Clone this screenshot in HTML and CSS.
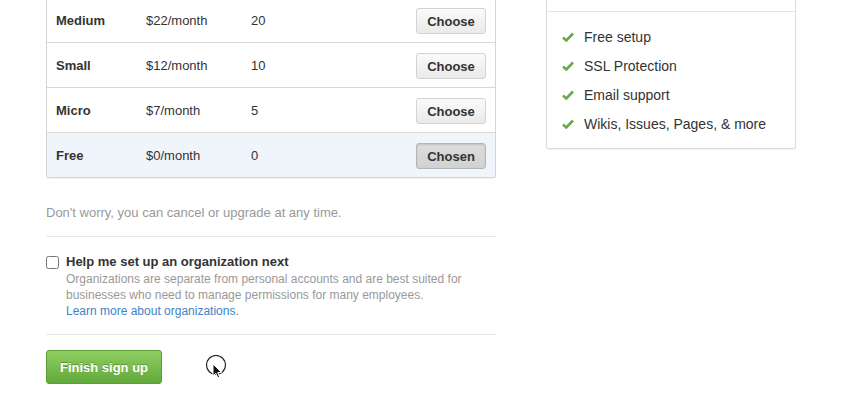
FILE: index.html
```
<!DOCTYPE html>
<html>
<head>
<meta charset="utf-8">
<link rel="stylesheet" href="styles.css">
</head>
<body>
<div class="page">
  <div class="main">
    <div class="plans">
      <div class="plan"><span class="name">Medium</span><span class="price">$22/month</span><span class="repos">20</span><button class="btn">Choose</button></div>
      <div class="plan"><span class="name">Small</span><span class="price">$12/month</span><span class="repos">10</span><button class="btn">Choose</button></div>
      <div class="plan"><span class="name">Micro</span><span class="price">$7/month</span><span class="repos">5</span><button class="btn">Choose</button></div>
      <div class="plan selected"><span class="name">Free</span><span class="price">$0/month</span><span class="repos">0</span><button class="btn chosen">Chosen</button></div>
    </div>
    <p class="note">Don't worry, you can cancel or upgrade at any time.</p>
    <div class="org">
      <input type="checkbox" class="check">
      <div class="org-text">
        <div class="org-label">Help me set up an organization next</div>
        <div class="org-desc">Organizations are separate from personal accounts and are best suited for businesses who need to manage permissions for many employees.<br><a href="#">Learn more about organizations.</a></div>
      </div>
    </div>
    <div class="actions">
      <button class="finish">Finish sign up</button>
    </div>
  </div>
  <div class="side">
    <div class="side-head"></div>
    <ul class="features">
      <li><svg class="tick" viewBox="0 0 12 10" width="12" height="10"><path d="M1 5.5 L4.3 8.5 L11 1.5" fill="none" stroke="#6aa84f" stroke-width="2.6"/></svg>Free setup</li>
      <li><svg class="tick" viewBox="0 0 12 10" width="12" height="10"><path d="M1 5.5 L4.3 8.5 L11 1.5" fill="none" stroke="#6aa84f" stroke-width="2.6"/></svg>SSL Protection</li>
      <li><svg class="tick" viewBox="0 0 12 10" width="12" height="10"><path d="M1 5.5 L4.3 8.5 L11 1.5" fill="none" stroke="#6aa84f" stroke-width="2.6"/></svg>Email support</li>
      <li><svg class="tick" viewBox="0 0 12 10" width="12" height="10"><path d="M1 5.5 L4.3 8.5 L11 1.5" fill="none" stroke="#6aa84f" stroke-width="2.6"/></svg>Wikis, Issues, Pages, &amp; more</li>
    </ul>
  </div>
</div>
<svg class="cursor" width="30" height="30" viewBox="0 0 30 30">
  <circle cx="11" cy="10" r="9.5" fill="none" stroke="#222" stroke-width="1.2"/>
  <path d="M8 9 L8 21 L10.8 18.3 L12.8 22.8 L14.6 22 L12.7 17.6 L16.5 17.5 Z" fill="#111" stroke="#fff" stroke-width="1"/>
</svg>
</body>
</html>
```
FILE: styles.css
```
* { box-sizing: border-box; }
html, body { margin: 0; padding: 0; background: #fff; }
body {
  font-family: "Liberation Sans", Arial, sans-serif;
  color: #333;
  font-size: 13px;
  overflow: hidden;
  height: 408px;
}
.page {
  display: flex;
  gap: 50px;
  margin: -2px 0 0 46px;
  align-items: flex-start;
}
.main { width: 450px; }
.plans {
  border: 1px solid #d5d5d5;
  border-top: none;
  border-radius: 0 0 3px 3px;
  overflow: hidden;
  box-shadow: 0 1px 1px rgba(0,0,0,0.06);
}
.plan {
  display: flex;
  align-items: center;
  height: 45px;
  padding: 0 9px 0 9px;
  border-bottom: 1px solid #d8d8d8;
}
.plan:last-child { border-bottom: none; height: 44px; }
.plan.selected { background: #f0f5fc; }
.name { width: 90px; font-weight: bold; }
.price { width: 105px; }
.repos { flex: 1; }
.btn {
  width: 70px;
  height: 26px;
  font-family: "Liberation Sans", Arial, sans-serif;
  font-size: 13px;
  font-weight: bold;
  color: #333;
  background: linear-gradient(#fafafa, #eaeaea);
  border: 1px solid #d3d3d3;
  border-radius: 3px;
  padding: 0;
  margin-top: 2px;
}
.btn.chosen {
  background: linear-gradient(#dcdcdc, #d2d2d2);
  border-color: #b5b5b5;
  box-shadow: inset 0 1px 2px rgba(0,0,0,0.12);
}
.note {
  margin: 26px 0 0;
  line-height: 18px;
  color: #999;
  font-size: 13px;
  padding-bottom: 14px;
  border-bottom: 1px solid #e8e8e8;
}
.org {
  display: flex;
  gap: 7px;
  padding: 16px 0 15px;
  border-bottom: 1px solid #e8e8e8;
}
.check {
  margin: 3px 0 0 0;
  width: 13px;
  height: 13px;
}
.org-label { font-weight: bold; line-height: 18px; font-size: 13px; }
.org-desc {
  font-size: 12px;
  line-height: 16px;
  color: #999;
  margin-top: 0;
  width: 410px;
}
.org-desc a { color: #4183c4; text-decoration: none; }
.actions { padding-top: 15px; }
.finish {
  width: 116px;
  height: 34px;
  font-family: "Liberation Sans", Arial, sans-serif;
  font-size: 13px;
  font-weight: bold;
  color: #fff;
  text-shadow: 0 -1px 0 rgba(0,0,0,0.25);
  background: linear-gradient(#8fcf62, #62a83a);
  border: 1px solid #5d9e35;
  border-radius: 3px;
  padding: 0;
}
.side {
  width: 250px;
  border: 1px solid #dcdcdc;
  border-top: none;
  border-radius: 0 0 3px 3px;
  box-shadow: 0 1px 1px rgba(0,0,0,0.06);
}
.side-head { height: 14px; border-bottom: 1px solid #e5e5e5; }
.features {
  list-style: none;
  margin: 0;
  padding: 10px 15px 10px;
}
.features li {
  display: flex;
  align-items: center;
  height: 29px;
  font-size: 14px;
  color: #333;
}
.tick { margin-right: 10px; flex: none; }
.cursor {
  position: absolute;
  left: 205px;
  top: 355px;
}
```
